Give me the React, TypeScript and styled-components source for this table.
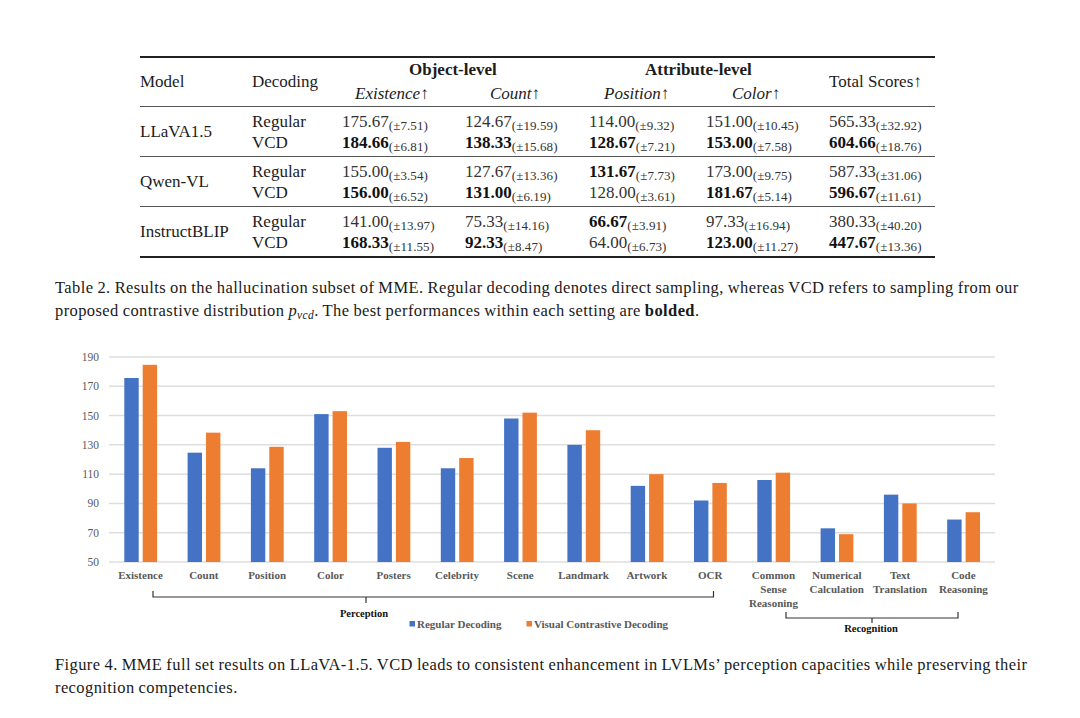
import React from 'react'
import styled, { createGlobalStyle } from 'styled-components'

const GlobalStyle = createGlobalStyle`
  html, body {
    margin: 0;
    padding: 0;
    background: #ffffff;
  }
  body {
    font-family: "Liberation Serif", "Times New Roman", serif;
    color: #1a1a1a;
  }
`

type Cell = { v: string; sd: string; b?: boolean }
interface Row { dec: string; cells: Cell[] }
interface Group { model: string; rows: Row[] }

const groups: Group[] = [
  {
    model: 'LLaVA1.5',
    rows: [
      { dec: 'Regular', cells: [
        { v: '175.67', sd: '±7.51' }, { v: '124.67', sd: '±19.59' }, { v: '114.00', sd: '±9.32' },
        { v: '151.00', sd: '±10.45' }, { v: '565.33', sd: '±32.92' },
      ] },
      { dec: 'VCD', cells: [
        { v: '184.66', sd: '±6.81', b: true }, { v: '138.33', sd: '±15.68', b: true }, { v: '128.67', sd: '±7.21', b: true },
        { v: '153.00', sd: '±7.58', b: true }, { v: '604.66', sd: '±18.76', b: true },
      ] },
    ],
  },
  {
    model: 'Qwen-VL',
    rows: [
      { dec: 'Regular', cells: [
        { v: '155.00', sd: '±3.54' }, { v: '127.67', sd: '±13.36' }, { v: '131.67', sd: '±7.73', b: true },
        { v: '173.00', sd: '±9.75' }, { v: '587.33', sd: '±31.06' },
      ] },
      { dec: 'VCD', cells: [
        { v: '156.00', sd: '±6.52', b: true }, { v: '131.00', sd: '±6.19', b: true }, { v: '128.00', sd: '±3.61' },
        { v: '181.67', sd: '±5.14', b: true }, { v: '596.67', sd: '±11.61', b: true },
      ] },
    ],
  },
  {
    model: 'InstructBLIP',
    rows: [
      { dec: 'Regular', cells: [
        { v: '141.00', sd: '±13.97' }, { v: '75.33', sd: '±14.16' }, { v: '66.67', sd: '±3.91', b: true },
        { v: '97.33', sd: '±16.94' }, { v: '380.33', sd: '±40.20' },
      ] },
      { dec: 'VCD', cells: [
        { v: '168.33', sd: '±11.55', b: true }, { v: '92.33', sd: '±8.47', b: true }, { v: '64.00', sd: '±6.73' },
        { v: '123.00', sd: '±11.27', b: true }, { v: '447.67', sd: '±13.36', b: true },
      ] },
    ],
  },
]

const colWidths = [112, 90, 123, 124, 117, 123, 106]

// chart data: regular vs. vcd per category
const categories: { label: string[]; reg: number; vcd: number }[] = [
  { label: ['Existence'], reg: 175.67, vcd: 184.66 },
  { label: ['Count'], reg: 124.67, vcd: 138.33 },
  { label: ['Position'], reg: 114, vcd: 128.67 },
  { label: ['Color'], reg: 151, vcd: 153 },
  { label: ['Posters'], reg: 128, vcd: 132 },
  { label: ['Celebrity'], reg: 114, vcd: 121 },
  { label: ['Scene'], reg: 148, vcd: 152 },
  { label: ['Landmark'], reg: 130, vcd: 140 },
  { label: ['Artwork'], reg: 102, vcd: 110 },
  { label: ['OCR'], reg: 92, vcd: 104 },
  { label: ['Common', 'Sense', 'Reasoning'], reg: 106, vcd: 111 },
  { label: ['Numerical', 'Calculation'], reg: 73, vcd: 69 },
  { label: ['Text', 'Translation'], reg: 96, vcd: 90 },
  { label: ['Code', 'Reasoning'], reg: 79, vcd: 84 },
]

const TOP = 340
const BASE = 562 - TOP
const SCALE = 205 / 140
const yOf = (v: number) => BASE - (v - 50) * SCALE
const cx = (i: number) => 140.5 + i * 63.3

const Page = styled.div`
  width: 1080px;
  padding-top: 56px;
  box-sizing: border-box;
`
const TableWrap = styled.div`
  margin-left: 140px;
  width: 795px;
`
const Table = styled.table`
  border-collapse: collapse;
  table-layout: fixed;
  width: 795px;
  font-size: 17px;
  color: #1c1c1c;
  border-top: 2px solid #222;
  border-bottom: 2px solid #222;
`
const HeadCell = styled.th<{ $pad?: number }>`
  font-weight: normal;
  text-align: left;
  padding: 0 0 0 ${p => p.$pad ?? 0}px;
  vertical-align: middle;
  white-space: nowrap;
  height: 24px;
`
const GroupTitle = styled.div<{ $pad: number }>`
  font-weight: bold;
  padding-left: ${p => p.$pad}px;
`
const Metric = styled.span`
  font-style: italic;
`
const Body = styled.tbody`
  border-top: 1.5px solid #555;
`
const Td = styled.td<{ $first?: boolean; $last?: boolean }>`
  padding: ${p => (p.$first ? 4 : 0)}px 0 ${p => (p.$last ? 3 : 0)}px 0;
  height: 21px;
  white-space: nowrap;
  vertical-align: middle;
`
const ModelCell = styled.td`
  vertical-align: middle;
  white-space: nowrap;
  padding: 0;
`
const Num = styled.span<{ $b?: boolean }>`
  font-weight: ${p => (p.$b ? 'bold' : 'normal')};
  color: ${p => (p.$b ? '#111' : '#333')};
`
const Sd = styled.span`
  font-size: 13px;
  letter-spacing: 0.1px;
  position: relative;
  top: 3px;
  color: #333;
`
const Caption = styled.p<{ $top: number }>`
  margin: ${p => p.$top}px 0 0 55px;
  font-size: 16.5px;
  letter-spacing: 0.4px;
  word-spacing: -0.5px;
  line-height: 22.5px;
  white-space: nowrap;
  color: #1a1a1a;
`
const MathSub = styled.span`
  font-style: italic;
  font-size: 11.5px;
  position: relative;
  top: 3px;
`
const ChartSvg = styled.svg`
  display: block;
  margin-top: 17px;
`
const Tick = styled.text`
  font-family: "Liberation Serif", serif;
  font-size: 11.5px;
  fill: #595959;
`
const CatLabel = styled.text`
  font-family: "Liberation Serif", serif;
  font-weight: bold;
  font-size: 11px;
  fill: #595959;
`
const GroupLabel = styled.text`
  font-family: "Liberation Serif", serif;
  font-weight: bold;
  font-size: 10.5px;
  fill: #111;
`
const LegendText = styled.text`
  font-family: "Liberation Serif", serif;
  font-weight: bold;
  font-size: 11px;
  fill: #595959;
`

const BLUE = '#4472C4'
const ORANGE = '#ED7D31'

const Chart: React.FC = () => {
  const ticks = [50, 70, 90, 110, 130, 150, 170, 190]
  const pY = 597 - TOP
  const rY = 618 - TOP
  return (
    <ChartSvg width={1080} height={300} viewBox="0 0 1080 300">
      {ticks.map(t => (
        <g key={t}>
          <line x1={109} x2={995} y1={yOf(t)} y2={yOf(t)} stroke="#dedede" strokeWidth={1.5} />
          <Tick x={99} y={yOf(t) + 4} textAnchor="end">{t}</Tick>
        </g>
      ))}
      {categories.map((c, i) => (
        <g key={c.label.join(' ')}>
          <rect x={cx(i) - 16.2} y={yOf(c.reg)} width={14.4} height={BASE - yOf(c.reg)} fill={BLUE} />
          <rect x={cx(i) + 2.2} y={yOf(c.vcd)} width={14.4} height={BASE - yOf(c.vcd)} fill={ORANGE} />
          {c.label.map((l, k) => (
            <CatLabel key={l} x={cx(i)} y={579 - TOP + k * 14} textAnchor="middle">{l}</CatLabel>
          ))}
        </g>
      ))}
      <path
        d={`M153 ${pY - 6} L153 ${pY} L713.5 ${pY} L713.5 ${pY - 6} M366 ${pY} L366 ${pY + 6}`}
        stroke="#333" strokeWidth={1.2} fill="none"
      />
      <GroupLabel x={364} y={617 - TOP} textAnchor="middle">Perception</GroupLabel>
      <path
        d={`M786 ${rY - 6} L786 ${rY} L958 ${rY} L958 ${rY - 6} M872 ${rY} L872 ${rY + 5}`}
        stroke="#333" strokeWidth={1.2} fill="none"
      />
      <GroupLabel x={871} y={632 - TOP} textAnchor="middle">Recognition</GroupLabel>
      <rect x={409.5} y={621 - TOP} width={5.5} height={5.5} fill={BLUE} />
      <LegendText x={417} y={628 - TOP}>Regular Decoding</LegendText>
      <rect x={526.5} y={621 - TOP} width={5.5} height={5.5} fill={ORANGE} />
      <LegendText x={534} y={628 - TOP}>Visual Contrastive Decoding</LegendText>
    </ChartSvg>
  )
}

const App: React.FC = () => (
  <Page>
    <GlobalStyle />
    <TableWrap>
      <Table>
        <colgroup>
          {colWidths.map((w, i) => <col key={i} style={{ width: w }} />)}
        </colgroup>
        <thead>
          <tr>
            <HeadCell rowSpan={2}>Model</HeadCell>
            <HeadCell rowSpan={2}>Decoding</HeadCell>
            <HeadCell colSpan={2}><GroupTitle $pad={67}>Object-level</GroupTitle></HeadCell>
            <HeadCell colSpan={2}><GroupTitle $pad={56}>Attribute-level</GroupTitle></HeadCell>
            <HeadCell rowSpan={2}>Total Scores↑</HeadCell>
          </tr>
          <tr>
            <HeadCell $pad={13}><Metric>Existence↑</Metric></HeadCell>
            <HeadCell $pad={25}><Metric>Count↑</Metric></HeadCell>
            <HeadCell $pad={15}><Metric>Position↑</Metric></HeadCell>
            <HeadCell $pad={26}><Metric>Color↑</Metric></HeadCell>
          </tr>
        </thead>
        {groups.map(g => (
          <Body key={g.model}>
            {g.rows.map((r, ri) => (
              <tr key={r.dec}>
                {ri === 0 && <ModelCell rowSpan={2}>{g.model}</ModelCell>}
                <Td $first={ri === 0} $last={ri === 1}>{r.dec}</Td>
                {r.cells.map((c, ci) => (
                  <Td key={ci} $first={ri === 0} $last={ri === 1}>
                    <Num $b={c.b}>{c.v}</Num><Sd>({c.sd})</Sd>
                  </Td>
                ))}
              </tr>
            ))}
          </Body>
        ))}
      </Table>
    </TableWrap>
    <Caption $top={19}>
      Table 2. Results on the hallucination subset of MME. Regular decoding denotes direct sampling, whereas VCD refers to sampling from our<br />
      proposed contrastive distribution <i>p</i><MathSub>vcd</MathSub>. The best performances within each setting are <b>bolded</b>.
    </Caption>
    <Chart />
    <Caption $top={14}>
      Figure 4. MME full set results on LLaVA-1.5. VCD leads to consistent enhancement in LVLMs’ perception capacities while preserving their<br />
      recognition competencies.
    </Caption>
  </Page>
)

export default App
